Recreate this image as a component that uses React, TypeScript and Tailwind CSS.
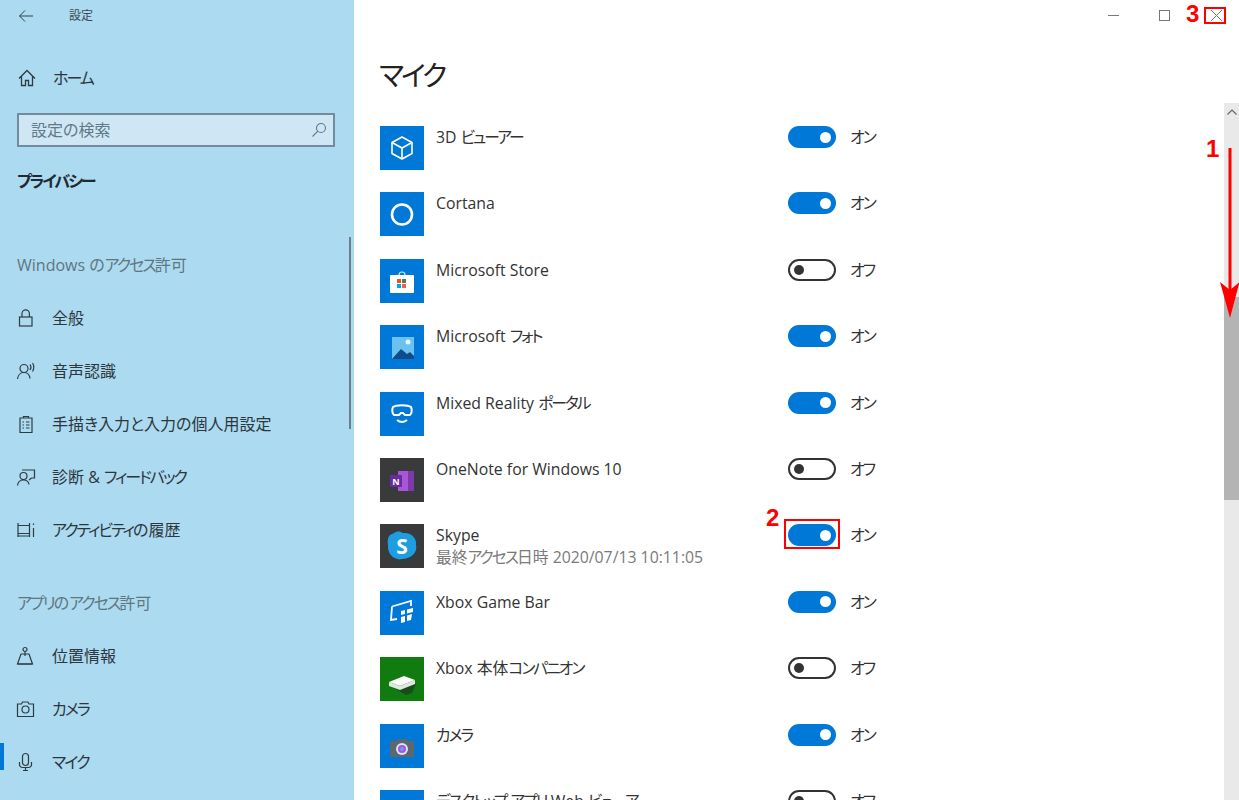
import type React from "react";

const FONT = "font-['Open_Sans','Noto_Sans_CJK_JP',sans-serif] [font-feature-settings:'palt']";

// katakana in the reference's font runs narrower than in Noto
const Kana = ({ text }: { text: string }) => (
  <>
    {text.split(/([ァ-ヶー]+)/).map((part, i) =>
      i % 2 ? (
        <span key={i} className="tracking-[-2px]">
          {part}
        </span>
      ) : (
        part
      ),
    )}
  </>
);

const NavIcon = ({ children }: { children: React.ReactNode }) => (
  <svg viewBox="0 0 20 20" className="w-5 h-5 shrink-0" fill="none" stroke="#2f3b42" strokeWidth="1.2">
    {children}
  </svg>
);

const navGeneral = [
  {
    label: "全般",
    icon: (
      <>
        <rect x="3.5" y="9" width="12.5" height="9" />
        <path d="M6 9V5.5a3.7 3.7 0 0 1 7.4 0V9" />
      </>
    ),
  },
  {
    label: "音声認識",
    icon: (
      <>
        <circle cx="8" cy="7.5" r="4" />
        <path d="M1.5 18c.4-3.8 3-6.5 6.5-6.5s5.6 2.4 6 6" />
        <path d="M14 3.5c1 1.3 1 4 0 5.5M16.5 2c1.7 2.2 1.7 6.300 0 8.500" />
      </>
    ),
  },
  {
    label: "手描き入力と入力の個人用設定",
    icon: (
      <>
        <path d="M4 4h12v14.500H4z" />
        <path d="M7.500 4V2.500h5V4M6.500 8h1.500M6.500 11h1.500M6.500 14h1.500M10 8h3.500M10 11h3.500M10 14h3.500" />
      </>
    ),
  },
  {
    label: "診断 & フィードバック",
    icon: (
      <>
        <circle cx="7.500" cy="9" r="3.500" />
        <path d="M1.500 18.500c.4-3.500 2.800-5.500 6-5.500s5 1.500 5.600 4.500" />
        <path d="M6 3h12.500v8h-3l-2.500 2" />
      </>
    ),
  },
  {
    label: "アクティビティの履歴",
    icon: (
      <>
        <path d="M2 3v14M13.500 3v14M2 5.500h11.500M2 13.500h11.500M2 16h11.500M17.500 3.500v1.500M17.500 8v9" />
      </>
    ),
  },
];

const navApps = [
  {
    label: "位置情報",
    icon: (
      <>
        <circle cx="9" cy="3.500" r="2" />
        <path d="M9 5.500V10M5 8h8l3.500 10H1.500z" />
        <path d="M1.500 18h15" />
      </>
    ),
  },
  {
    label: "カメラ",
    icon: (
      <>
        <path d="M1.500 5h4l1-2h5.500l1 2h4.500v12.500h-16z" />
        <circle cx="9.500" cy="10.500" r="3.500" />
      </>
    ),
  },
  {
    label: "マイク",
    active: true,
    icon: (
      <>
        <rect x="6.500" y="1.500" width="6" height="12" rx="3" />
        <path d="M3.500 10v2.500a3 3 0 0 0 3 3h6a3 3 0 0 0 3-3V10M9.500 15.500v3M7 18.500h5" />
      </>
    ),
  },
];

const NavRow = ({ label, icon, active }: { label: string; icon: React.ReactNode; active?: boolean }) => (
  <div className="relative flex items-center h-[53px] pl-[16px] gap-[16px] text-[16px] text-[#2c363c]">
    {active && <div className="absolute left-0 top-[8px] w-[4px] h-[27px] bg-[#0078d7]" />}
    <NavIcon>{icon}</NavIcon>
    <span>
      <Kana text={label} />
    </span>
  </div>
);

const white = { fill: "none", stroke: "#fff", strokeWidth: 1.6 };

const AppIcons: Record<string, React.ReactNode> = {
  viewer: (
    <g {...white}>
      <path d="M22 11l10 5.500v11L22 33l-10-5.500v-11z" strokeLinejoin="round" />
      <path d="M12 16.500L22 22l10-5.500M22 22v11" />
    </g>
  ),
  cortana: <circle cx="22" cy="22.500" r="10" fill="none" stroke="#fff" strokeWidth="2.600" />,
  store: (
    <>
      <path d="M19 16a3 3 0 0 1 6 0" fill="none" stroke="#cfe6f7" strokeWidth="1.200" />
      <rect x="10" y="16" width="24" height="18" rx="1" fill="#fff" />
      <rect x="17" y="20" width="4" height="4" fill="#f25022" />
      <rect x="22" y="20" width="4" height="4" fill="#5a7a4a" />
      <rect x="17" y="25" width="4" height="4" fill="#00a4ef" />
      <rect x="22" y="25" width="4" height="4" fill="#f25f4f" />
    </>
  ),
  photos: (
    <>
      <rect x="12" y="12" width="22" height="22" fill="#6cc2ee" />
      <circle cx="28" cy="17" r="2.500" fill="#e3f4fd" />
      <path d="M12 34l9-10 6 5 3-2 4 4v3z" fill="#0f4c8a" />
    </>
  ),
  mixed: (
    <g {...white}>
      <path d="M13 15c3-2.500 15-2.500 18 0 1.500 3 .5 7-1 8h-5l-2-2h-2l-2 2h-5c-1.500-1-2.500-5-1-8z" strokeWidth="2" />
      <path d="M17 28c3 2.500 7 2.500 10 0" strokeWidth="2" />
    </g>
  ),
  onenote: (
    <>
      <path d="M18 13h16v20H18z" fill="#a855d8" />
      <path d="M28 13h6v20h-6z" fill="#7c3aa8" />
      <rect x="10" y="17" width="12" height="12" rx="1" fill="#6a2aa0" />
      <text x="16" y="26.500" fontSize="9" fontWeight="700" fill="#fff" textAnchor="middle" fontFamily="Open Sans, sans-serif">N</text>
    </>
  ),
  skype: (
    <>
      <path d="M16 8c3-1 5 0 7 1 8-1 14 5 13 12 2 7-5 14-14 14-6 2-15-4-14-14-1-4 0-8 2-10z" fill="#1c9ee0" />
      <text x="22" y="30" fontSize="21" fontWeight="700" fill="#fff" textAnchor="middle" fontFamily="Open Sans, sans-serif">S</text>
    </>
  ),
  gamebar: (
    <g {...white}>
      <path d="M12 15.500L31 10v5M12 15.500L11 29l6-1" strokeWidth="1.800" />
      <path d="M21 20l4-1v4l-4 1zM27 18.500l6-1.500v4l-6 1.500zM21 26l4-1v6l-4 1zM27 24.500l5-1.500-1 6-4 1z" fill="#fff" stroke="none" />
    </g>
  ),
  companion: (
    <>
      <path d="M14 31l12-9 10 5-4 9-6 2z" fill="#222" opacity="0.55" />
      <path d="M9 25l15-6 11 4-15 6z" fill="#fff" />
      <path d="M9 25v4l11 4v-4zM20 29v4l15-6v-4z" fill="#dfe8dc" />
    </>
  ),
  camera: (
    <>
      <path d="M10 17h6l2-2h8l2 2h6v16H10z" fill="#5d6770" />
      <circle cx="22" cy="25" r="6" fill="#d8e6f2" />
      <circle cx="22" cy="25" r="4" fill="#b04fe0" />
      <circle cx="22" cy="25" r="2" fill="#5aa6e8" />
    </>
  ),
  webview: (
    <rect x="13" y="14" width="18" height="16" fill="none" stroke="#fff" strokeWidth="1.600" />
  ),
};

const apps = [
  { name: "3D ビューアー", icon: "viewer", bg: "bg-[#0078d7]", on: true },
  { name: "Cortana", icon: "cortana", bg: "bg-[#0078d7]", on: true },
  { name: "Microsoft Store", icon: "store", bg: "bg-[#0078d7]", on: false },
  { name: "Microsoft フォト", icon: "photos", bg: "bg-[#0078d7]", on: true },
  { name: "Mixed Reality ポータル", icon: "mixed", bg: "bg-[#0078d7]", on: true },
  { name: "OneNote for Windows 10", icon: "onenote", bg: "bg-[#393a3c]", on: false },
  { name: "Skype", sub: "最終アクセス日時 2020/07/13 10:11:05", icon: "skype", bg: "bg-[#393a3c]", on: true, marked: true },
  { name: "Xbox Game Bar", icon: "gamebar", bg: "bg-[#0078d7]", on: true },
  { name: "Xbox 本体コンパニオン", icon: "companion", bg: "bg-[#107c10]", on: false },
  { name: "カメラ", icon: "camera", bg: "bg-[#0078d7]", on: true },
  { name: "デスクトップ アプリ Web ビューアー", icon: "webview", bg: "bg-[#0078d7]", on: false },
];

const Toggle = ({ on, marked }: { on: boolean; marked?: boolean }) => (
  <div className="relative flex items-center gap-[14px] text-[16px] text-[#333] leading-[22px]">
    {on ? (
      <div className="w-[48px] h-[22px] rounded-full bg-[#0078d7] flex items-center justify-end pr-[5px]">
        <div className="w-[11px] h-[11px] rounded-full bg-white" />
      </div>
    ) : (
      <div className="w-[48px] h-[22px] rounded-full border-2 border-[#333] flex items-center pl-[4px]">
        <div className="w-[10px] h-[10px] rounded-full bg-[#333]" />
      </div>
    )}
    {marked && (
      <div className="absolute left-[-4px] top-[-5px] w-[56px] h-[30px] border-2 border-[#ff0000]" />
    )}
    <span>
      <Kana text={on ? "オン" : "オフ"} />
    </span>
  </div>
);

const AppRow = ({ app }: { app: (typeof apps)[number] }) => (
  <div className="flex items-start h-[44px] shrink-0">
    <div className={`w-[44px] h-[44px] shrink-0 ${app.bg}`}>
      <svg viewBox="0 0 44 44" className="w-[44px] h-[44px]">
        {AppIcons[app.icon]}
      </svg>
    </div>
    <div className="w-[364px] pl-[12px] text-[15.800px] leading-[22px] text-[#333]">
      <div>
        <Kana text={app.name} />
      </div>
      {app.sub && (
        <div className="text-[#7a7a7a]">
          <Kana text={app.sub} />
        </div>
      )}
    </div>
    <Toggle on={app.on} marked={app.marked} />
  </div>
);

const Sidebar = () => (
  <div className="relative w-[354px] h-full shrink-0 bg-[#acdaf0] overflow-hidden">
    <div className="flex items-center h-[31px] pl-[18px] text-[12px] text-[#3a4a52]">
      <svg viewBox="0 0 16 16" className="w-4 h-4" fill="none" stroke="#33424a" strokeWidth="1">
        <path d="M15 8H1.500M7 2.500L1.500 8 7 13.500" />
      </svg>
      <span className="ml-[35px]">設定</span>
    </div>
    <div className="flex items-center h-[53px] mt-[20px] pl-[18px] gap-[17px] text-[16px] text-[#2c363c]">
      <svg viewBox="0 0 18 18" className="w-[18px] h-[18px]" fill="none" stroke="#2f3b42" strokeWidth="1.300">
        <path d="M1 9.500L9 1.500l8 8M3.500 7.500v9h4v-5h3v5h4v-9" />
      </svg>
      <span>
        <Kana text="ホーム" />
      </span>
    </div>
    <div className="ml-[17px] mr-[19px] mt-[9px] h-[34px] border-2 border-[#6f8d9e] bg-[#cfe7f4] flex items-center justify-between pl-[12px] pr-[6px] text-[16px] text-[#5f7a88]">
      <span>設定の検索</span>
      <svg viewBox="0 0 16 16" className="w-4 h-4" fill="none" stroke="#5f7a88" strokeWidth="1.100">
        <circle cx="10" cy="6" r="4.500" />
        <path d="M6.800 9.200L1.500 14.500" />
      </svg>
    </div>
    <div className="pl-[17px] mt-[23px] text-[16px] leading-[22px] font-bold text-[#1f2a30]">
      <Kana text="プライバシー" />
    </div>
    <div className="flex items-center h-[53px] mt-[46px] pl-[17px] text-[16px] text-[#60767f]">
      <span>
        <Kana text="Windows のアクセス許可" />
      </span>
    </div>
    {navGeneral.map((item) => (
      <NavRow key={item.label} {...item} />
    ))}
    <div className="flex items-center h-[53px] mt-[20px] pl-[17px] text-[16px] text-[#60767f]">
      <span>
        <Kana text="アプリのアクセス許可" />
      </span>
    </div>
    {navApps.map((item) => (
      <NavRow key={item.label} {...item} />
    ))}
    {/* overlay scrollbar of the nav pane */}
    <div className="absolute right-[3px] top-[237px] w-[2px] h-[192px] bg-[#6a7f8b]" />
  </div>
);

export default function App() {
  return (
    <div className={`relative flex w-[1239px] h-[800px] overflow-hidden bg-white ${FONT}`}>
      <Sidebar />
      <div className="flex-1 min-w-0 flex flex-col">
        <div className="flex justify-end h-[30px] shrink-0 pt-[10px] pr-[17px]">
          <svg viewBox="0 0 11 11" className="w-[11px] h-[11px]" fill="none" stroke="#777" strokeWidth="1">
            <path d="M0 5.500h11" />
          </svg>
          <svg viewBox="0 0 11 11" className="w-[11px] h-[11px] ml-[40px]" fill="none" stroke="#777" strokeWidth="1">
            <rect x="0.500" y="0.500" width="10" height="10" />
          </svg>
          <svg viewBox="0 0 11 11" className="w-[11px] h-[11px] ml-[41px]" fill="none" stroke="#777" strokeWidth="1">
            <path d="M0 0l11 11M11 0L0 11" />
          </svg>
        </div>
        <div className="pl-[25px] pt-[25px] h-[96px] shrink-0 text-[28px] leading-[40px] tracking-[-3px] text-[#222]">マイク</div>
        <div className="flex flex-col gap-[22.4px] pl-[26px]">
          {apps.map((app) => (
            <AppRow key={app.name} app={app} />
          ))}
        </div>
      </div>
      {/* right scrollbar */}
      <div className="absolute right-0 top-[103px] bottom-0 w-[15px] bg-[#e9e9e9] flex flex-col items-center">
        <svg viewBox="0 0 10 6" className="w-[10px] h-[6px] mt-[6px]" fill="none" stroke="#666" strokeWidth="1.200">
          <path d="M0.500 5.500L5 1l4.500 4.500" />
        </svg>
        <div className="w-full h-[203px] mt-[182px] bg-[#b4b4b4]" />
      </div>
      {/* annotations */}
      <div className="absolute left-[1204px] top-[7px] w-[22px] h-[17px] border-2 border-[#ff0000]" />
      <div className="absolute left-[1186px] top-0 text-[24px] leading-[28px] font-bold text-[#ff0000] font-['Liberation_Sans',sans-serif]">3</div>
      <div className="absolute left-[1206px] top-[135px] text-[24px] leading-[28px] font-bold text-[#ff0000] font-['Liberation_Sans',sans-serif]">1</div>
      <div className="absolute left-[766px] top-[504px] text-[24px] leading-[28px] font-bold text-[#ff0000] font-['Liberation_Sans',sans-serif]">2</div>
      <svg viewBox="0 0 20 170" className="absolute left-[1220px] top-[148px] w-[20px] h-[170px]">
        <path d="M8.500 0h3v145h-3z" fill="#ff0000" />
        <path d="M0 134L10 170l9.500-36-9.500 8z" fill="#ff0000" />
      </svg>
    </div>
  );
}
